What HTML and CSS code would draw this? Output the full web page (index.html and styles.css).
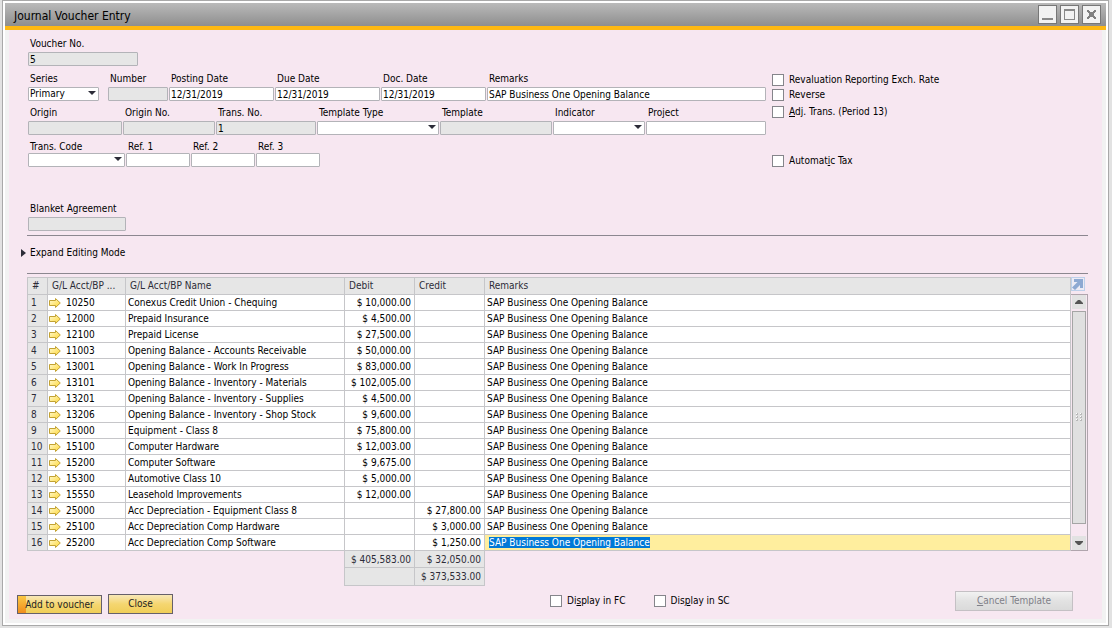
FILE: index.html
```
<!DOCTYPE html>
<html lang="en">
<head>
<meta charset="utf-8">
<title>Journal Voucher Entry</title>
<link rel="stylesheet" href="styles.css">
</head>
<body>
<svg class="defs" aria-hidden="true">
  <defs>
    <linearGradient id="gold" x1="0" y1="0" x2="1" y2="1">
      <stop offset="0" stop-color="#fffbd8"/>
      <stop offset="1" stop-color="#ffd62e"/>
    </linearGradient>
    <symbol id="link-arrow" viewBox="0 0 12 10">
      <path d="M.5 2.5h6v-2L11.300 5 6.500 9.500v-2h-6z" fill="url(#gold)" stroke="#c2a233"/>
    </symbol>
  </defs>
</svg>
<main class="window">
  <header class="titlebar">
    <h1 class="title">Journal Voucher Entry</h1>
    <div class="controls">
      <button class="control" type="button" aria-label="Minimize"><svg width="17" height="17" viewBox="0 0 17 17"><path d="M3 12h11v2H3z" fill="#888"/></svg></button>
      <button class="control" type="button" aria-label="Maximize"><svg width="17" height="17" viewBox="0 0 17 17"><path d="M3 3h11v11H3zM4 5v8h9V5z" fill="#888" fill-rule="evenodd"/></svg></button>
      <button class="control" type="button" aria-label="Close"><svg width="17" height="17" viewBox="0 0 17 17"><path d="M4 4h2v1h1v1h3V5h1V4h2v2h-1v1h-1v3h1v1h1v2h-2v-1h-1v-1H7v1H6v1H4v-2h1v-1h1V7H5V6H4z" fill="#808080"/></svg></button>
    </div>
  </header>
  <form class="content">
    <div class="head">
      <div class="fields">
        <div class="row row-voucher">
          <label class="field"><span>Voucher No.</span><input class="box" readonly value="5"></label>
        </div>
        <div class="row row-series">
          <label class="field"><span>Series</span><span class="drop"><select class="box"><option>Primary</option></select></span></label>
          <label class="field number"><span>Number</span><input class="box" readonly></label>
          <label class="field"><span>Posting Date</span><input class="box" value="12/31/2019"></label>
          <label class="field"><span>Due Date</span><input class="box" value="12/31/2019"></label>
          <label class="field"><span>Doc. Date</span><input class="box" value="12/31/2019"></label>
          <label class="field"><span>Remarks</span><input class="box" value="SAP Business One Opening Balance"></label>
        </div>
        <div class="row row-origin">
          <label class="field"><span>Origin</span><input class="box" readonly></label>
          <label class="field"><span>Origin No.</span><input class="box" readonly></label>
          <label class="field"><span>Trans. No.</span><input class="box" readonly value="1"></label>
          <label class="field"><span>Template Type</span><span class="drop"><select class="box"><option></option></select></span></label>
          <label class="field"><span>Template</span><input class="box" readonly></label>
          <label class="field"><span>Indicator</span><span class="drop"><select class="box"><option></option></select></span></label>
          <label class="field"><span>Project</span><input class="box"></label>
        </div>
        <div class="row row-refs">
          <label class="field tight"><span>Trans. Code</span><span class="drop"><select class="box"><option></option></select></span></label>
          <label class="field tight"><span>Ref. 1</span><input class="box"></label>
          <label class="field tight"><span>Ref. 2</span><input class="box"></label>
          <label class="field tight"><span>Ref. 3</span><input class="box"></label>
        </div>
        <div class="row row-blanket">
          <label class="field"><span>Blanket Agreement</span><input class="box" readonly></label>
        </div>
      </div>
      <div class="options">
        <label class="check"><input type="checkbox">Revaluation Reporting Exch. Rate</label>
        <label class="check"><input type="checkbox">Reverse</label>
        <label class="check adjust"><input type="checkbox"><span><u>A</u>dj. Trans. (Period 13)</span></label>
        <label class="check auto"><input type="checkbox"><span>Automat<u>i</u>c Tax</span></label>
      </div>
    </div>
    <div class="expand-bar">
      <button class="expand" type="button">Expand Editing Mode</button>
    </div>
    <div class="grid">
      <table class="lines">
        <colgroup><col class="c-num"><col class="c-acct"><col class="c-name"><col class="c-money"><col class="c-money"><col></colgroup>
        <thead>
          <tr><th>#</th><th>G/L Acct/BP ...</th><th>G/L Acct/BP Name</th><th>Debit</th><th>Credit</th><th>Remarks</th></tr>
        </thead>
        <tbody>
          <tr><th>1</th><td><svg class="go"><use href="#link-arrow"/></svg>10250</td><td>Conexus Credit Union - Chequing</td><td class="m">$ 10,000.00</td><td class="m"></td><td>SAP Business One Opening Balance</td></tr>
          <tr><th>2</th><td><svg class="go"><use href="#link-arrow"/></svg>12000</td><td>Prepaid Insurance</td><td class="m">$ 4,500.00</td><td class="m"></td><td>SAP Business One Opening Balance</td></tr>
          <tr><th>3</th><td><svg class="go"><use href="#link-arrow"/></svg>12100</td><td>Prepaid License</td><td class="m">$ 27,500.00</td><td class="m"></td><td>SAP Business One Opening Balance</td></tr>
          <tr><th>4</th><td><svg class="go"><use href="#link-arrow"/></svg>11003</td><td>Opening Balance - Accounts Receivable</td><td class="m">$ 50,000.00</td><td class="m"></td><td>SAP Business One Opening Balance</td></tr>
          <tr><th>5</th><td><svg class="go"><use href="#link-arrow"/></svg>13001</td><td>Opening Balance - Work In Progress</td><td class="m">$ 83,000.00</td><td class="m"></td><td>SAP Business One Opening Balance</td></tr>
          <tr><th>6</th><td><svg class="go"><use href="#link-arrow"/></svg>13101</td><td>Opening Balance - Inventory - Materials</td><td class="m">$ 102,005.00</td><td class="m"></td><td>SAP Business One Opening Balance</td></tr>
          <tr><th>7</th><td><svg class="go"><use href="#link-arrow"/></svg>13201</td><td>Opening Balance - Inventory - Supplies</td><td class="m">$ 4,500.00</td><td class="m"></td><td>SAP Business One Opening Balance</td></tr>
          <tr><th>8</th><td><svg class="go"><use href="#link-arrow"/></svg>13206</td><td>Opening Balance - Inventory - Shop Stock</td><td class="m">$ 9,600.00</td><td class="m"></td><td>SAP Business One Opening Balance</td></tr>
          <tr><th>9</th><td><svg class="go"><use href="#link-arrow"/></svg>15000</td><td>Equipment - Class 8</td><td class="m">$ 75,800.00</td><td class="m"></td><td>SAP Business One Opening Balance</td></tr>
          <tr><th>10</th><td><svg class="go"><use href="#link-arrow"/></svg>15100</td><td>Computer Hardware</td><td class="m">$ 12,003.00</td><td class="m"></td><td>SAP Business One Opening Balance</td></tr>
          <tr><th>11</th><td><svg class="go"><use href="#link-arrow"/></svg>15200</td><td>Computer Software</td><td class="m">$ 9,675.00</td><td class="m"></td><td>SAP Business One Opening Balance</td></tr>
          <tr><th>12</th><td><svg class="go"><use href="#link-arrow"/></svg>15300</td><td>Automotive Class 10</td><td class="m">$ 5,000.00</td><td class="m"></td><td>SAP Business One Opening Balance</td></tr>
          <tr><th>13</th><td><svg class="go"><use href="#link-arrow"/></svg>15550</td><td>Leasehold Improvements</td><td class="m">$ 12,000.00</td><td class="m"></td><td>SAP Business One Opening Balance</td></tr>
          <tr><th>14</th><td><svg class="go"><use href="#link-arrow"/></svg>25000</td><td>Acc Depreciation - Equipment Class 8</td><td class="m"></td><td class="m">$ 27,800.00</td><td>SAP Business One Opening Balance</td></tr>
          <tr><th>15</th><td><svg class="go"><use href="#link-arrow"/></svg>25100</td><td>Acc Depreciation Comp Hardware</td><td class="m"></td><td class="m">$ 3,000.00</td><td>SAP Business One Opening Balance</td></tr>
          <tr><th>16</th><td><svg class="go"><use href="#link-arrow"/></svg>25200</td><td>Acc Depreciation Comp Software</td><td class="m"></td><td class="m">$ 1,250.00</td><td class="active"><mark>SAP Business One Opening Balance</mark></td></tr>
        </tbody>
        <tfoot>
          <tr><td class="none" colspan="3"></td><td class="m">$ 405,583.00</td><td class="m">$ 32,050.00</td><td class="none"></td></tr>
          <tr><td class="none" colspan="3"></td><td class="m"></td><td class="m">$ 373,533.00</td><td class="none"></td></tr>
        </tfoot>
      </table>
      <div class="side">
        <button class="popout" type="button" aria-label="Expand table"><svg width="12" height="12" viewBox="0 0 12 12"><path d="M2 1h9v9H8V7L3 12 0 9.500 5.500 4H2z" fill="#8ea9d2"/></svg></button>
        <div class="scroll">
          <button class="step" type="button" aria-label="Scroll up"><svg width="8" height="4" viewBox="0 0 8 4"><path d="M0 4v-1l3-3h2l3 3v1z" fill="#555"/></svg></button>
          <div class="thumb"><svg width="7" height="9" viewBox="0 0 7 9"><path d="M0 0h2v2H0zM0 3h2v2H0zM0 6h2v2H0zM4 0h2v2H4zM4 3h2v2H4zM4 6h2v2H4z" fill="#b8b8b8"/><path d="M0 0h1v1H0zM0 3h1v1H0zM0 6h1v1H0zM4 0h1v1H4zM4 3h1v1H4zM4 6h1v1H4z" fill="#fff"/></svg></div>
          <button class="step" type="button" aria-label="Scroll down"><svg width="8" height="4" viewBox="0 0 8 4"><path d="M0 0v1l3 3h2l3-3v-1z" fill="#555"/></svg></button>
        </div>
      </div>
    </div>
    <footer class="footer">
      <div class="actions">
        <button class="btn primary" type="button">Add to voucher</button>
        <button class="btn" type="button">Close</button>
      </div>
      <div class="display">
        <label class="check"><input type="checkbox"><span>Di<u>s</u>play in FC</span></label>
        <label class="check"><input type="checkbox"><span>Dis<u>p</u>lay in SC</span></label>
      </div>
      <button class="btn cancel" type="button" disabled><u>C</u>ancel Template</button>
    </footer>
  </form>
</main>
</body>
</html>
```
FILE: styles.css
```
* {
  box-sizing: border-box;
}

body {
  margin: 0;
  padding: 0 3px 2px 2px;
  background: #e2e2e2;
  color: #000;
  font: 10px/14px "DejaVu Sans Condensed", "DejaVu Sans", sans-serif;
}

button,
input,
select {
  margin: 0;
  font: inherit;
  color: inherit;
}

.defs {
  position: absolute;
  width: 0;
  height: 0;
}

.window {
  padding: 2px;
  border: 1px solid #a9a9a9;
  background: #fff;
}

/* Title bar */
.titlebar {
  display: flex;
  align-items: center;
  justify-content: space-between;
  height: 27px;
  padding: 0 5px 0 9px;
  border-bottom: 4px solid #fdb813;
  background: linear-gradient(#bababa, #8e8e8e);
}

.title {
  margin: 0;
  padding-top: 3px;
  font-size: 12px;
  font-weight: normal;
}

.controls {
  display: flex;
  gap: 3px;
}

.control {
  display: block;
  width: 19px;
  height: 19px;
  padding: 0;
  border: 1px solid #777;
  background: #f2f2f2;
}

.control svg {
  display: block;
}

/* Content */
.content {
  padding: 7px 14px 5px 18px;
  border: solid #f2f2f2;
  border-width: 0 4px 4px;
  background: #f7e7f1;
}

.head {
  display: grid;
  grid-template-columns: 738fr 316fr;
  gap: 6px;
  padding: 0 0 4px 1px;
  border-bottom: 1px solid #8c8790;
}

.row {
  display: grid;
  gap: 1px;
}

.row-voucher {
  grid-template-columns: 110px;
}

.row-series {
  grid-template-columns: 71px 68px 105px 105px 105px 1fr;
  margin-top: 6px;
}

.row-origin {
  grid-template-columns: 94px 92px 100px 122px 112px 92px 1fr;
  margin-top: 5px;
}

.row-refs {
  grid-template-columns: 97px 64px 64px 64px;
  margin-top: 5px;
}

.row-blanket {
  grid-template-columns: 98px;
  margin-top: 35px;
}

.field {
  display: grid;
  gap: 1px;
}

.field > span:first-child {
  padding-left: 2px;
  white-space: nowrap;
}

.tight {
  gap: 0;
}

.tight > span:first-child {
  line-height: 13px;
}

.number {
  padding-left: 8px;
}

.box {
  display: block;
  width: 100%;
  min-width: 0;
  height: 14px;
  padding: 0 1px;
  border: 1px solid #b3b3b8;
  border-radius: 1px;
  background: #fff;
  line-height: 12px;
}

.box:read-only:not(select) {
  background: #e6e6e6;
}

.drop {
  position: relative;
  display: block;
}

.drop select {
  appearance: none;
}

.drop::after {
  content: "";
  position: absolute;
  top: 4px;
  right: 3px;
  border: solid transparent;
  border-width: 4px 4px 0;
  border-top-color: #2c2c38;
  pointer-events: none;
}

/* Check boxes */
.check {
  display: flex;
  align-items: center;
  gap: 5px;
  white-space: nowrap;
}

.check input {
  appearance: none;
  width: 12px;
  height: 12px;
  border: 1px solid #85858b;
  background: #fff;
}

.options {
  padding-top: 35px;
}

.options .check {
  height: 15px;
}

.options .adjust {
  margin-top: 2px;
}

.options .auto {
  margin-top: 34px;
}

/* Expand bar */
.expand-bar {
  height: 38px;
  padding-top: 10px;
  border-bottom: 1px solid #8c8790;
}

.expand {
  display: flex;
  align-items: center;
  gap: 4px;
  margin-left: -6px;
  padding: 0;
  border: 0;
  background: none;
}

.expand::before {
  content: "";
  border: solid transparent;
  border-width: 4px 0 4px 5px;
  border-left-color: #2c2c38;
}

/* Journal lines */
.grid {
  display: grid;
  grid-template-columns: 1fr 17px;
  margin-top: 3px;
}

.lines {
  width: 100%;
  border-collapse: collapse;
  table-layout: fixed;
}

.c-num {
  width: 20px;
}

.c-acct {
  width: 78px;
}

.c-name {
  width: 219px;
}

.c-money {
  width: 70px;
}

.lines th,
.lines td {
  height: 16px;
  padding: 0 2px;
  border: 1px solid #c6c6c9;
  background: #fff;
  font-weight: normal;
  line-height: 15px;
  text-align: left;
  white-space: nowrap;
}

.lines th {
  padding: 0 3px;
  background: #e6e6e6;
  color: #2c2c38;
}

.lines thead th {
  height: 17px;
  padding: 0 4px;
  line-height: 16px;
}

.lines .m {
  padding-right: 3px;
  text-align: right;
}

.lines tfoot td {
  height: 18px;
  background: #e6e6e6;
  color: #2c2c38;
}

.lines tfoot tr:first-child td {
  height: 17px;
}

.lines tfoot .none {
  border: 0;
  background: none;
}

.lines .active {
  padding-left: 4px;
  background: #ffee9e;
}

mark {
  background: #0078d7;
  color: #fff;
}

.go {
  width: 12px;
  height: 10px;
  margin: 0 5px 0 -1px;
  vertical-align: -2px;
}

.side {
  display: flex;
  flex-direction: column;
  padding-bottom: 35px;
}

.popout {
  width: 14px;
  height: 14px;
  margin-bottom: 3px;
  padding: 0;
  border: 1px solid #bdd0ea;
  background: #ecebf5;
}

.popout svg,
.step svg,
.thumb svg {
  display: block;
}

.scroll {
  display: flex;
  flex: 1;
  flex-direction: column;
  padding-right: 1px;
  padding-left: 1px;
  border: 1px solid #b0a5ad;
  border-left: 0;
}

.step {
  display: grid;
  place-items: center;
  height: 14px;
  padding: 0;
  border: 0;
  background: #e2e2e2;
}

.thumb {
  display: grid;
  flex: 1;
  place-items: center;
  margin: 2px 0 12px;
  border: 1px solid #a5a5a5;
  background: #e0e0e0;
}

/* Footer */
.footer {
  display: flex;
  align-items: flex-start;
  margin: 5px 15px 0 -10px;
}

.actions {
  display: flex;
  flex: 533;
  align-items: flex-end;
  gap: 6px;
  padding-top: 3px;
}

.display {
  display: flex;
  flex: 405;
  gap: 28px;
  padding-top: 3px;
}

.btn {
  height: 20px;
  width: 65px;
  padding: 0;
  border: 1px solid #66606a;
  background: linear-gradient(#f8e8b8, #f5d670 50%, #f0cd58);
  color: #222;
}

.primary {
  width: 85px;
  height: 19px;
  background: linear-gradient(#fbc846, #f08d1c) 0 0 / 8px 100% no-repeat, linear-gradient(#f8e8b8, #f5d670 50%, #f0cd58);
}

.cancel {
  width: 118px;
  border-color: #c4c0c4;
  background: linear-gradient(#f2f2f2, #e2e2e2 50%, #dadada);
  color: #808088;
}
```
